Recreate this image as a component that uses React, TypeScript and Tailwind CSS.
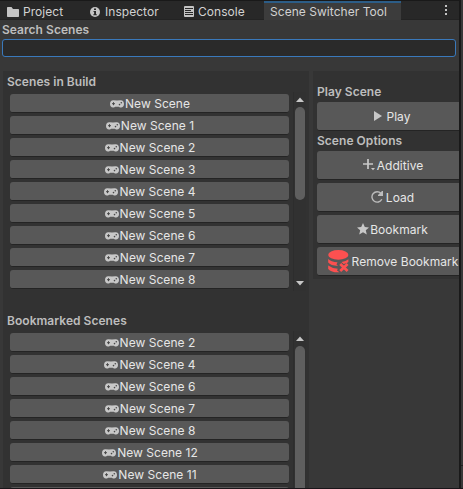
import React from "react";

const buildScenes = [
  "New Scene",
  "New Scene 1",
  "New Scene 2",
  "New Scene 3",
  "New Scene 4",
  "New Scene 5",
  "New Scene 6",
  "New Scene 7",
  "New Scene 8",
];

const bookmarkedScenes = [
  "New Scene 2",
  "New Scene 4",
  "New Scene 6",
  "New Scene 7",
  "New Scene 8",
  "New Scene 12",
  "New Scene 11",
];

function FolderIcon() {
  return (
    <svg width="12" height="10" viewBox="0 0 12 10" className="shrink-0" fill="#c4c4c4">
      <path d="M0 .7Q0 0 .7 0H4.5L6 2H11.3Q12 2 12 2.7V9.3Q12 10 11.3 10H.7Q0 10 0 9.3Z" />
    </svg>
  );
}

function InfoIcon() {
  return (
    <svg width="10" height="10" viewBox="0 0 10 10" className="shrink-0">
      <circle cx="5" cy="5" r="5" fill="#c4c4c4" />
      <path d="M4 1.6H6V3H4ZM3.5 4H6V7.3H6.8V8.3H3.3V7.3H4.1V5H3.5Z" fill="#282828" />
    </svg>
  );
}

function ConsoleIcon() {
  return (
    <svg width="10" height="11" viewBox="0 0 10 11" className="-mt-px shrink-0">
      <rect width="10" height="11" rx="1" fill="#c4c4c4" />
      <path d="M1 2.5H9M1 4.5H7M1 6.5H9M1 8.5H9" stroke="#282828" strokeWidth="1" />
    </svg>
  );
}

function GamepadIcon() {
  return (
    <svg width="14" height="8" viewBox="0 0 14 8" className="shrink-0">
      <path
        d="M3.6.3Q7 .6 10.4.3C12.7.1 14 1.8 14 4C14 6.1 12.6 7.7 10.7 7.5C9.5 7.4 9 6.7 8.2 6.7H5.8C5 6.7 4.5 7.4 3.3 7.5C1.4 7.7 0 6.1 0 4C0 1.8 1.3.1 3.6.3Z"
        fill="#c8c8c8"
      />
      <path d="M2 3.7H5M3.5 2.2V5.2" stroke="#484848" strokeWidth="1" />
      <circle cx="11.3" cy="2.7" r=".8" fill="#484848" />
      <circle cx="9.5" cy="4.6" r=".8" fill="#484848" />
    </svg>
  );
}

function SceneButton({ label }: { label?: string }) {
  return (
    <button className="flex h-[19px] w-[279px] shrink-0 items-center justify-center rounded-[3px] border-b border-[#242424] bg-[#585858] pl-px pt-[2px] text-[#e6e6e6]">
      {label && (
        <>
          <GamepadIcon />
          <span className="ml-px">{label}</span>
        </>
      )}
    </button>
  );
}

function Arrow({ down = false }: { down?: boolean }) {
  return (
    <svg width="8" height="5" viewBox="0 0 8 5" className="shrink-0" fill="#c8c8c8">
      <path d={down ? "M0 0H8L4 4.5Z" : "M0 5H8L4 .5Z"} />
    </svg>
  );
}

function SceneList({ scenes, full }: { scenes: string[]; full: boolean }) {
  return (
    <div className="flex">
      <div className="flex w-[284px] flex-col gap-[3px] pl-[6px] pt-[2px]">
        {scenes.map((name) => (
          <SceneButton key={name} label={name} />
        ))}
        {!full && <SceneButton />}
      </div>
      <div
        className={
          "ml-[5px] flex w-[13px] flex-col items-center border-l border-[#2d2d2d] bg-[#313131] pt-[5px] " +
          (full ? "h-[199px]" : "h-[160px]")
        }
      >
        <Arrow />
        {full ? (
          <>
            <div className="mt-[5px] h-[93px] w-[10px] rounded-full bg-[#5f5f5f]" />
            <div className="mt-auto pb-[5px]">
              <Arrow down />
            </div>
          </>
        ) : (
          <div className="mt-[5px] h-[180px] w-[10px] shrink-0 rounded-full bg-[#5f5f5f]" />
        )}
      </div>
    </div>
  );
}

function ActionButton({ icon, label }: { icon: React.ReactNode; label: string }) {
  return (
    <button className="flex h-[29px] w-[151px] shrink-0 items-center justify-center rounded-[3px] border-b border-[#242424] bg-[#585858] text-[#e6e6e6]">
      {icon}
      <span className="whitespace-nowrap pt-[2px]">{label}</span>
    </button>
  );
}

export default function App() {
  return (
    <div className="flex h-[489px] w-[463px] flex-col overflow-hidden border-b border-[#191519] bg-[#383838] font-['Inter',sans-serif] text-[12px] leading-4 tracking-[0.04px] text-[#d2d2d2]">
      <div className="flex h-[488px]">
        <div className="flex w-[459px] shrink-0 flex-col overflow-hidden">
          <header className="flex h-5 shrink-0 border-b border-t border-b-[#232323] border-t-[#191919] bg-[#282828]">
            <div className="flex w-[90px] items-center pl-[7px] pt-[3px]">
              <FolderIcon />
              <span className="ml-1">Project</span>
            </div>
            <div className="flex w-[94px] items-center pt-[3px]">
              <InfoIcon />
              <span className="ml-[5px]">Inspector</span>
            </div>
            <div className="flex w-[80px] items-center pt-[3px]">
              <ConsoleIcon />
              <span className="ml-[4px]">Console</span>
            </div>
            <div className="flex h-[19px] w-[137px] items-center border-t-2 border-[#2c5d87] bg-[#3c3c3c] pl-[6px] pt-px">
              <span className="whitespace-nowrap">Scene Switcher Tool</span>
            </div>
            <div className="ml-[44px] flex flex-col gap-[2px] pt-1">
              <i className="size-[2px] bg-[#c4c4c4]" />
              <i className="size-[2px] bg-[#c4c4c4]" />
              <i className="size-[2px] bg-[#c4c4c4]" />
            </div>
          </header>
          <div className="h-[51px] shrink-0 pl-[2px] pt-[2px]">
            <h2 className="font-semibold text-[#bdbdbd]">Search Scenes</h2>
            <input
              aria-label="Search Scenes"
              className="mt-px block h-[18px] w-[454px] rounded-[3px] border border-[#3a79bb] bg-[#2a2a2a] outline-none"
            />
          </div>
          <main className="flex h-[417px] shrink-0 overflow-hidden">
            <section className="ml-[3px] w-[306px] shrink-0 bg-[#323232] pl-px">
              <h2 className="h-[21px] pl-[3px] pt-[3px] font-semibold text-[#bdbdbd]">Scenes in Build</h2>
              <SceneList scenes={buildScenes} full />
              <h2 className="h-[40px] pl-[3px] pt-[22px] font-semibold text-[#bdbdbd]">Bookmarked Scenes</h2>
              <SceneList scenes={bookmarkedScenes} full={false} />
            </section>
            <section className="ml-1 h-[208px] w-[146px] shrink-0 overflow-hidden bg-[#323232] pl-1 pt-[13px]">
              <h2 className="h-[18px] font-semibold text-[#bdbdbd]">Play Scene</h2>
              <ActionButton
                label="Play"
                icon={
                  <svg width="8" height="10" viewBox="0 0 8 10" className="mr-[4px]" fill="#c8c8c8">
                    <path d="M0 0L8 5L0 10Z" />
                  </svg>
                }
              />
              <h2 className="h-[20px] pt-[2px] font-semibold text-[#bdbdbd]">Scene Options</h2>
              <div className="flex flex-col gap-[3px]">
                <ActionButton
                  label="Additive"
                  icon={
                    <svg width="12" height="12" viewBox="0 0 12 12" className="ml-px mr-[2px]">
                      <path d="M0 5H10M5 0V10" stroke="#c8c8c8" strokeWidth="1.7" />
                      <path d="M8 9H12L10 11.2Z" fill="#c8c8c8" />
                    </svg>
                  }
                />
                <ActionButton
                  label="Load"
                  icon={
                    <svg width="13" height="12" viewBox="0 0 13 12" className="mr-[2px]">
                      <path d="M10.8 8.3A5.2 5.2 0 1 1 10 2.4" fill="none" stroke="#bcbcbc" strokeWidth="1.4" />
                      <path d="M12 0V5H7V4L11 0Z" fill="#bcbcbc" />
                    </svg>
                  }
                />
                <ActionButton
                  label="Bookmark"
                  icon={
                    <svg width="12" height="12" viewBox="0 0 12 12" className="mr-px" fill="#c8c8c8">
                      <path d="M6 0L7.8 4L12 4.4L8.8 7.2L9.8 11.5L6 9.2L2.2 11.5L3.2 7.2L0 4.4L4.2 4Z" />
                    </svg>
                  }
                />
                <ActionButton
                  label="Remove Bookmark"
                  icon={
                    <svg width="21" height="23" viewBox="0 0 21 23" className="ml-px mr-[3px] shrink-0" fill="#fc5050">
                      <ellipse cx="10.3" cy="4.9" rx="10.1" ry="4.8" />
                      <path d="M.2 9Q3 12 9.5 12.3L8.5 14.5L10 16Q2.5 15.5.2 12.5Z" />
                      <path d="M20.4 9.3V12L18.5 13.3L15.6 14L13.5 12Q18 11.5 20.4 9.3Z" />
                      <path d="M.2 15.5Q4 18.4 9.8 18.7L9 20.5L11.5 22.3Q3.5 22.7.2 19Z" />
                      <path d="M12.2 14L19.6 21M19.6 14L12.2 21" stroke="#fc5050" strokeWidth="2.8" />
                    </svg>
                  }
                />
              </div>
            </section>
          </main>
        </div>
        <div className="w-[2px] shrink-0 bg-[#191919]" />
        <div className="flex-1">
          <div className="h-[466px] border-b border-[#202020]" />
        </div>
      </div>
    </div>
  );
}
